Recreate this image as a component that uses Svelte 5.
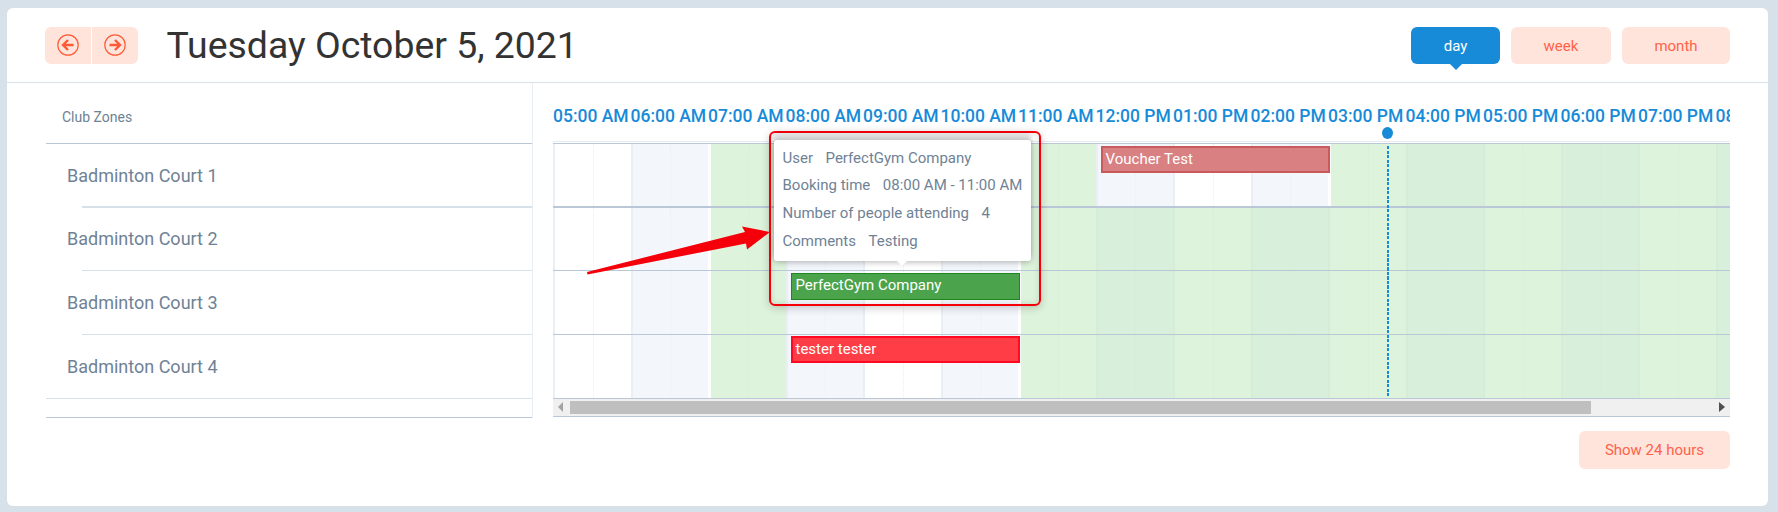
<script>
	const hourWidth = 77.5;
	const left = (hour) => (hour - 5) * hourWidth;

	const hours = [
		'05:00 AM', '06:00 AM', '07:00 AM', '08:00 AM', '09:00 AM', '10:00 AM', '11:00 AM', '12:00 PM',
		'01:00 PM', '02:00 PM', '03:00 PM', '04:00 PM', '05:00 PM', '06:00 PM', '07:00 PM', '08:00 PM',
	];

	const base = ['w', 'b', 'g', 'b', 'w', 'b', 'g', 'd', 'g', 'd', 'g', 'd', 'g', 'd', 'g', 'd'];
	const first = [...base];
	first[7] = 'b';
	first[8] = 'w';
	first[9] = 'b';

	const rows = [
		{ name: 'Badminton Court 1', cells: first, zone: 64, lane: 63 },
		{ name: 'Badminton Court 2', cells: base, zone: 63, lane: 64 },
		{ name: 'Badminton Court 3', cells: base, zone: 64, lane: 64 },
		{ name: 'Badminton Court 4', cells: base, zone: 64, lane: 64 },
	];

	const events = [
		{ row: 0, label: 'Voucher Test', from: 12, to: 15, kind: 'voucher' },
		{ row: 2, label: 'PerfectGym Company', from: 8, to: 11, kind: 'booking' },
		{ row: 3, label: 'tester tester', from: 8, to: 11, kind: 'tester' },
	];

	const details = [
		['User', 'PerfectGym Company'],
		['Booking time', '08:00 AM - 11:00 AM'],
		['Number of people attending', '4'],
		['Comments', 'Testing'],
	];

	// open hours after a closed one start with a white gap
	const opens = (cells, i) => cells[i] === 'g' && i > 0 && !'gd'.includes(cells[i - 1]);
</script>

<div class="card">
	<header>
		<div class="nav">
			<button aria-label="Previous">
				<svg width="24" height="24" viewBox="0 0 24 24" fill="none" stroke="#ff5a36">
					<circle cx="12" cy="12" r="10.2" stroke-width="1.2" />
					<path d="M17.5 12H7.5M12 7l-5 5 5 5" stroke-width="2.4" />
				</svg>
			</button>
			<button aria-label="Next">
				<svg width="24" height="24" viewBox="0 0 24 24" fill="none" stroke="#ff5a36">
					<circle cx="12" cy="12" r="10.2" stroke-width="1.2" />
					<path d="M6.5 12h10M12 7l5 5-5 5" stroke-width="2.4" />
				</svg>
			</button>
		</div>
		<h1>Tuesday October 5, 2021</h1>
		<div class="views">
			<button class="view active">day</button>
			<button class="view week">week</button>
			<button class="view month">month</button>
		</div>
	</header>

	<div class="body">
		<aside>
			<div class="aside-head">Club Zones</div>
			{#each rows as row}
				<div class="zone" style="height: {row.zone}px">{row.name}</div>
			{/each}
			<div class="aside-foot"></div>
		</aside>

		<section class="timeline">
			<div class="labels">
				{#each hours as hour}
					<span>{hour}</span>
				{/each}
			</div>
			<div class="grid">
				{#each rows as row, r}
					<div class="row" style="height: {row.lane}px">
						{#each row.cells as cell, i}
							<div class="cell {cell}" class:opens={opens(row.cells, i)}></div>
						{/each}
						{#each events.filter((e) => e.row === r) as e}
							<div
								class="event {e.kind}"
								style="left: {left(e.from) + 5}px; width: {(e.to - e.from) * hourWidth - 3}px"
							>
								{e.label}
							</div>
						{/each}
					</div>
				{/each}
				<div class="now"></div>
			</div>
			<div class="scrollbar">
				<svg class="arrow-l" width="6" height="10" viewBox="0 0 6 10"><path d="M5 0v10L0 5z" fill="#a3a3a3" /></svg>
				<div class="thumb"></div>
				<svg class="arrow-r" width="6" height="10" viewBox="0 0 6 10"><path d="M0 0v10l6-5z" fill="#505050" /></svg>
			</div>
			<div class="now-dot"></div>

			<div class="highlight"></div>
			<div class="tooltip">
				{#each details as [key, value]}
					<div class="detail"><span>{key}</span><span>{value}</span></div>
				{/each}
			</div>
			<svg class="pointer" width="190" height="54" viewBox="0 0 190 54">
				<path d="M0 46L0.5 48.5 159 17.5 160 23.5 183 6 155 0.5 158 6z" fill="#f5000a" />
			</svg>
		</section>
	</div>

	<div class="footer">
		<button class="view more">Show 24 hours</button>
	</div>
</div>

<style>
	:global(body) {
		background: #d7e1ea;
		font-family: Roboto, 'Liberation Sans', sans-serif;
	}

	.card {
		margin: 8px 10px 6px 7px;
		height: 498px;
		background: #fff;
		border-radius: 6px;
		overflow: hidden;
		box-sizing: border-box;
	}

	header {
		display: flex;
		align-items: center;
		height: 75px;
		box-sizing: border-box;
		padding: 0 38px;
		border-bottom: 1px solid #d7e1ea;
	}

	button {
		border: 0;
		padding: 0;
		font-family: inherit;
		cursor: pointer;
	}

	.nav {
		display: flex;
		width: 93px;
		height: 37px;
		margin-top: 1px;
		border-radius: 6px;
		overflow: hidden;
		gap: 1px;
	}

	.nav button {
		flex: 1;
		display: flex;
		align-items: center;
		justify-content: center;
		background: #ffe4dc;
		padding-bottom: 2px;
	}

	h1 {
		margin: 2px 0 0 28.5px;
		font-size: 37.4px;
		font-weight: 400;
		color: #333;
		flex: 1;
		line-height: 1;
	}

	.views {
		display: flex;
		gap: 11px;
		margin-top: 1px;
	}

	.view {
		height: 37px;
		border-radius: 6px;
		background: #ffe4dc;
		color: #ff6248;
		font-size: 15px;
	}

	.active {
		position: relative;
		width: 89px;
		background: #178bd7;
		color: #fff;
	}

	.active::after {
		content: '';
		position: absolute;
		left: 39px;
		top: 37px;
		border: 6px solid transparent;
		border-top-color: #178bd7;
		border-bottom: 0;
	}

	.week {
		width: 100px;
	}

	.month {
		width: 108px;
	}

	.body {
		display: flex;
		padding: 0 38px 0 39px;
		gap: 20px;
	}

	aside {
		width: 487px;
		flex: none;
		box-sizing: border-box;
		border-right: 1px solid #e8eef4;
		color: #6f8295;
	}

	.aside-head {
		height: 61px;
		box-sizing: border-box;
		padding: 23px 0 0 16px;
		font-size: 14px;
		line-height: 22px;
		border-bottom: 1px solid #b9c7d6;
	}

	.zone {
		display: flex;
		align-items: center;
		box-sizing: border-box;
		padding: 0 0 2px 21px;
		font-size: 18px;
		position: relative;
	}

	.zone::after {
		content: '';
		position: absolute;
		left: 36px;
		right: 0;
		bottom: 0;
		height: 1px;
		background: #d7e1ea;
	}

	.zone:nth-of-type(2)::after {
		height: 2px;
	}

	.zone:nth-of-type(5)::after {
		left: 0;
	}

	.aside-foot {
		height: 19px;
		box-sizing: border-box;
		border-bottom: 1px solid #b9c7d6;
	}

	.timeline {
		position: relative;
		width: 1177px;
		flex: none;
		overflow: hidden;
	}

	.labels {
		display: flex;
		height: 59px;
		box-sizing: border-box;
		padding-top: 19px;
		border-bottom: 1px solid #e8ebef;
	}

	.labels span {
		flex: none;
		width: 77.5px;
		font-size: 17.5px;
		font-weight: 500;
		color: #178bd7;
		white-space: nowrap;
		line-height: 28px;
	}

	.grid {
		position: relative;
		border-top: 1px solid #fff;
	}

	.row {
		position: relative;
		display: flex;
		box-sizing: border-box;
		border-top: 1px solid #b9c7d6;
	}

	.row:nth-child(2) {
		border-top-width: 2px;
	}

	.cell {
		flex: none;
		width: 77.5px;
		box-sizing: border-box;
		border-left: 2px solid #e9eff5;
		position: relative;
	}

	.cell::after {
		content: '';
		position: absolute;
		left: 50%;
		top: 0;
		bottom: 0;
		border-left: 1px dotted #eaeff4;
	}

	.w {
		background: #fff;
	}

	.b {
		background: #f3f6fb;
	}

	.g {
		background: #def3db;
		border-left-color: #d6ebd8;
	}

	.d {
		background: #d7efdb;
		border-left-color: #d6ebd8;
	}

	.g::after,
	.d::after {
		border-left-color: #d7ecd5;
	}

	.cell.opens {
		border-left: 3px solid #fff;
	}

	.event {
		position: absolute;
		top: 2px;
		height: 27px;
		box-sizing: border-box;
		padding-left: 3px;
		font-size: 15px;
		line-height: 22px;
		color: #fff;
		white-space: nowrap;
	}

	.voucher {
		background: #d98082;
		border: 2px solid #c95a5c;
	}

	.booking {
		padding-left: 4px;
		background: #4ba34b;
		border: 1.5px solid #1d8720;
	}

	.tester {
		top: 1px;
		background: #ff3d47;
		border: 2px solid #ff0a22;
	}

	.now {
		position: absolute;
		left: 833.5px;
		top: 3px;
		bottom: 0;
		width: 2px;
		background: repeating-linear-gradient(#178bd7 0 3px, transparent 3px 4.5px);
	}

	.now-dot {
		position: absolute;
		left: 829px;
		top: 44px;
		width: 11px;
		height: 12px;
		border-radius: 50%;
		background: #178bd7;
	}

	.scrollbar {
		position: relative;
		display: flex;
		align-items: center;
		height: 19px;
		box-sizing: border-box;
		background: #f0f0f0;
		border-top: 1px solid #b9c7d6;
		border-bottom: 1px solid #b9c7d6;
		padding-left: 17px;
	}

	.thumb {
		width: 1021px;
		height: 13px;
		background: #bfbfbf;
	}

	.arrow-l {
		position: absolute;
		left: 5px;
		top: 3px;
	}

	.arrow-r {
		position: absolute;
		right: 5px;
		top: 3px;
	}

	.highlight {
		position: absolute;
		left: 216px;
		top: 48px;
		width: 272px;
		height: 175px;
		box-sizing: border-box;
		border: 2.5px solid #f5000a;
		border-radius: 6px;
		box-shadow: 0 2px 8px rgba(0, 0, 0, 0.2), inset 0 0 6px rgba(0, 0, 0, 0.12);
	}

	.tooltip {
		position: absolute;
		left: 221px;
		top: 57px;
		width: 257px;
		height: 121px;
		box-sizing: border-box;
		padding: 4px 8.5px 0;
		background: #fff;
		border-radius: 3px;
		box-shadow: 0 -6px 5px rgba(0, 0, 0, 0.13), 0 1px 6px rgba(0, 0, 0, 0.3);
		color: #6f8295;
		font-size: 15px;
	}

	.tooltip::after {
		content: '';
		position: absolute;
		left: 123px;
		top: 121px;
		border: 5px solid transparent;
		border-top-color: #fff;
		border-bottom: 0;
	}

	.detail {
		display: flex;
		gap: 12.5px;
		height: 27.6px;
		align-items: center;
		white-space: nowrap;
	}

	.pointer {
		position: absolute;
		left: 34px;
		top: 143px;
	}

	.footer {
		display: flex;
		justify-content: flex-end;
		padding: 13px 38px 0 0;
	}

	.more {
		width: 151px;
		height: 38px;
	}
</style>
